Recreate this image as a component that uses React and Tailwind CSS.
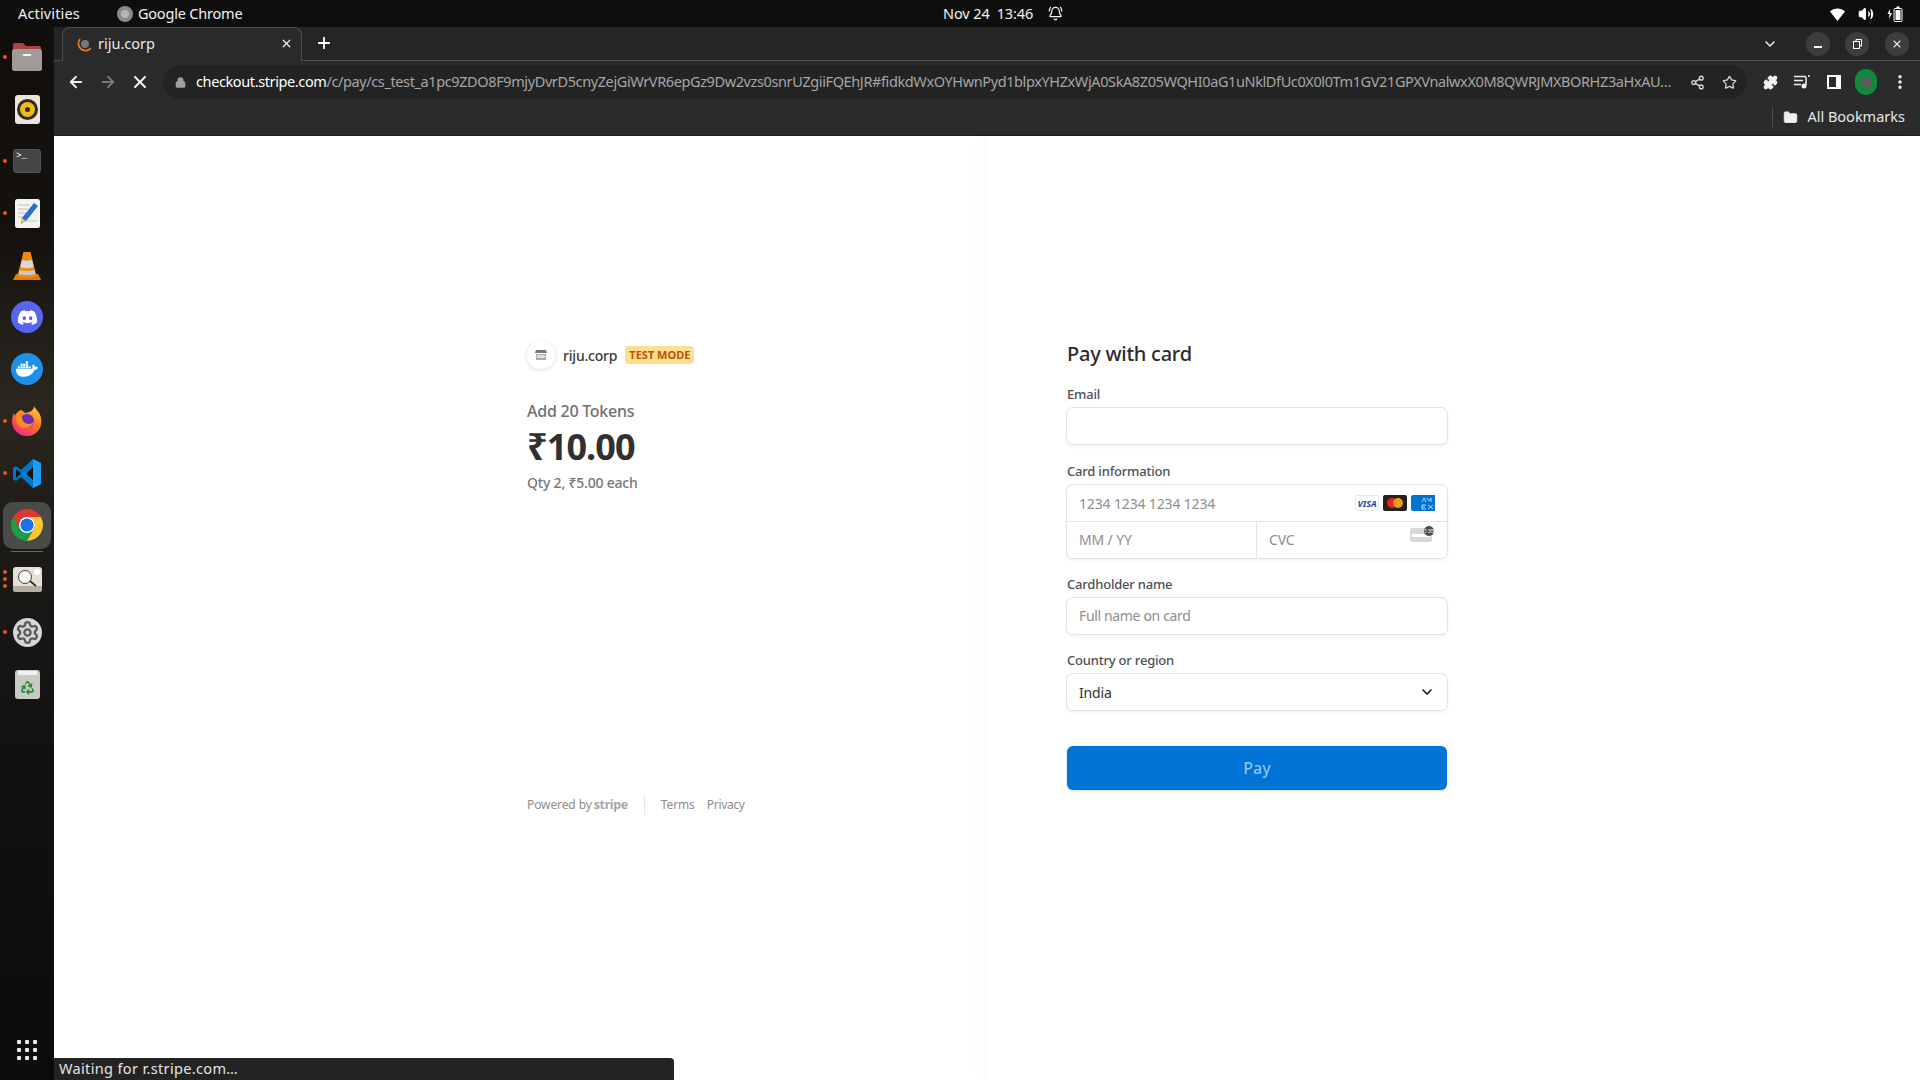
import React from 'react';
import { ArrowLeft, ArrowRight, X, Plus, ChevronDown, Lock, Star, Share2, Puzzle, MoreVertical, Folder, BellRing, Volume2, Settings, Recycle } from 'lucide-react';
import { FaDiscord, FaDocker } from 'react-icons/fa';

const Dots = ({ count = 1 }) => (
  <div className="absolute left-[3px] top-0 bottom-0 flex flex-col justify-center gap-[3px]">
    {Array.from({ length: count }).map((_, i) => (
      <span key={i} className="w-[4px] h-[4px] rounded-full bg-[#e95420]" />
    ))}
  </div>
);

const DockItem = ({ dots, className = '', children }) => (
  <div className={`relative h-[52px] flex items-center justify-center ${className}`}>
    {dots ? <Dots count={dots} /> : null}
    {children}
  </div>
);

const FilesIcon = () => (
  <svg width="32" height="30" viewBox="0 0 32 30">
    <path d="M2 3a2 2 0 0 1 2-2h8l3 3h13a2 2 0 0 1 2 2v6H2z" fill="#a8453c" />
    <rect x="1" y="7" width="30" height="22" rx="2.5" fill="#a09b98" />
    <rect x="12" y="12" width="8" height="2" fill="#f2f2f2" />
  </svg>
);

const RhythmboxIcon = () => (
  <div className="w-[25px] h-[29px] rounded-[3px] bg-[#ebe6da] flex items-center justify-center">
    <div className="w-[21px] h-[21px] rounded-full bg-[#2f2c28] flex items-center justify-center">
      <div className="w-[15px] h-[15px] rounded-full bg-[#eebb1c] flex items-center justify-center">
        <div className="w-[5px] h-[5px] rounded-full bg-[#2f2c28]" />
      </div>
    </div>
  </div>
);

const TerminalIcon = () => (
  <div className="w-[28px] h-[24px] rounded-[3px] bg-[#454545] border border-[#555] relative text-white text-[9px] leading-none pl-[2px] pt-[2px] font-['Liberation_Mono',monospace]">
    &gt;_
  </div>
);

const GeditIcon = () => (
  <svg width="25" height="29" viewBox="0 0 25 29">
    <rect width="25" height="29" rx="2.5" fill="#f3f3f1" />
    <path d="M3 6h12M3 10h10M3 14h8M3 18h6M12 22h10" stroke="#c4c1b8" strokeWidth="1" />
    <path d="M19 4l4 3-12 15-5 3 1-6z" fill="#2a6fd0" />
    <path d="M6 25l1-6 4 3z" fill="#e8b98a" />
  </svg>
);

const VlcIcon = () => (
  <svg width="28" height="31" viewBox="0 0 28 31">
    <path d="M0 30l3-6h22l3 6z" fill="#e07a0a" />
    <path d="M10.500 2h7l6 24c-3 2-16 2-19 0z" fill="#f08a10" />
    <path d="M9 10c3 1 7 1 10 0l1.600 7c-3 1.500-10 1.500-13.200 0z" fill="#d8d8d8" />
    <path d="M6.500 20c4 1.400 11 1.400 15 0l1 4c-4 1.600-13 1.600-17 0z" fill="#c8c8c8" />
  </svg>
);

const FirefoxIcon = () => (
  <svg width="30" height="30" viewBox="0 0 30 30">
    <defs>
      <linearGradient id="ffOuter" x1="0.8" y1="0" x2="0.2" y2="1">
        <stop offset="0" stopColor="#ffcf30" />
        <stop offset="0.5" stopColor="#ff6a2d" />
        <stop offset="1" stopColor="#f0268a" />
      </linearGradient>
    </defs>
    <path d="M22 0c1 3 6 6 7 12 2 10-5 18-14 18S0 23 0 15c0-3 1-6 2-8l1 3c1-3 4-6 7-6 0 2 2 3 4 3 3-1 8-2 8-7z" fill="url(#ffOuter)" />
    <circle cx="15" cy="15" r="7" fill="#6e2fb5" />
    <path d="M5 8c2-2 5-3 8-2-2 1-3 3-3 5 0 4 3 7 7 7 2 0 4-1 5-3-1 4-4 7-8 7-6 0-10-4-10-9 0-2 0-4 1-5z" fill="#ff8a1f" />
  </svg>
);

const VscodeIcon = () => (
  <svg width="28" height="29" viewBox="0 0 28 29">
    <path d="M20 0l8 4v21l-8 4-12-11-5 4-3-2v-11l3-2 5 4z" fill="#0078c8" />
    <path d="M20 0l8 4v21l-8 4z" fill="#1f9cf0" />
    <path d="M20 8l-7 6.500 7 6.500z" fill="#111" />
    <path d="M3 10l5 4.500-5 4.500z" fill="#111" />
  </svg>
);

const ChromeIcon = () => (
  <svg width="32" height="32" viewBox="2 2 44 44">
    <path d="M43.050 13A22 22 0 0 0 4.950 13L14.470 29.500A11 11 0 0 1 24 13Z" fill="#db3a2e" />
    <path d="M4.950 13A22 22 0 0 0 24 46L33.530 29.500A11 11 0 0 1 14.470 29.500Z" fill="#1f9b4c" />
    <path d="M24 46A22 22 0 0 0 43.050 13L24 13A11 11 0 0 1 33.530 29.500Z" fill="#fcc531" />
    <circle cx="24" cy="24" r="11" fill="#fff" />
    <circle cx="24" cy="24" r="9" fill="#1a73e8" />
  </svg>
);

const SearchAppIcon = () => (
  <div className="relative w-[29px] h-[25px] rounded-[3px] bg-[#e4e0d6] overflow-hidden">
    <div className="absolute left-0 right-0 bottom-0 h-[6px] bg-[#b5b0a2]" />
    <div className="absolute right-[2px] top-[2px] w-[6px] h-[6px] rounded-full bg-white" />
    <svg className="absolute inset-0" width="29" height="25" viewBox="0 0 29 25">
      <circle cx="12" cy="10" r="6.500" fill="#f5f5f3" stroke="#444" strokeWidth="1" />
      <path d="M17 14l6 5" stroke="#333" strokeWidth="1.800" />
    </svg>
  </div>
);

const SettingsIcon = () => (
  <div className="w-[29px] h-[29px] rounded-full bg-[#d6d6d4] flex items-center justify-center">
    <Settings size={25} strokeWidth={2.2} className="text-[#5a5a5a]" />
  </div>
);

const TrashIcon = () => (
  <div className="relative w-[25px] h-[29px] rounded-[3px] bg-[#c9c9c6] flex items-center justify-center pt-[6px]">
    <div className="absolute left-[3px] right-[3px] top-[1px] h-[4px] bg-[#f1f1f1]" />
    <Recycle size={15} strokeWidth={2.6} className="text-[#2d8a2d]" />
  </div>
);

const TopBar = () => (
  <div className="h-[27px] shrink-0 bg-[#0e0e0e] relative flex items-center text-[#f2f2f2] text-[14.500px] pl-[18px]">
    <span className="tracking-[0.15px]">Activities</span>
    <span className="ml-[37px] w-[16px] h-[16px] rounded-full bg-[#b5b5b5] border-[4px] border-[#8a8a8a]" />
    <span className="ml-[5px] tracking-[-0.2px]">Google Chrome</span>
    <div className="absolute left-[943px] top-0 h-full flex items-center gap-[7px] tracking-[-0.1px]">
      <span>Nov 24</span>
      <span>13:46</span>
      <BellRing size={15} className="ml-[8px]" />
    </div>
    <div className="ml-auto flex items-center gap-[13px] pr-[17px]">
      <svg width="15" height="14" viewBox="0 0 15 14">
        <path d="M0 4.500C4 0.500 11 0.500 15 4.500L7.500 14z" fill="#fff" />
      </svg>
      <Volume2 size={16} fill="#fff" />
      <svg width="16" height="16" viewBox="0 0 16 16">
        <path d="M3 3L0.500 8h2L2 13l3-6H3z" fill="#fff" />
        <rect x="7" y="2.500" width="8" height="13" rx="1" fill="none" stroke="#fff" />
        <rect x="8.500" y="4" width="5" height="10" fill="#fff" />
        <rect x="9.500" y="0.500" width="3" height="2" fill="#fff" />
      </svg>
    </div>
  </div>
);

const Dock = () => (
  <div className="w-[54px] shrink-0 relative flex flex-col pt-[4px] bg-[linear-gradient(180deg,#120e0c_0%,#15110f_20%,#2c2820_36%,#1d1b18_48%,#111110_70%,#0b0b0b_100%)]">
    <DockItem dots={1}><FilesIcon /></DockItem>
    <DockItem><RhythmboxIcon /></DockItem>
    <DockItem dots={1}><TerminalIcon /></DockItem>
    <DockItem dots={1}><GeditIcon /></DockItem>
    <DockItem><VlcIcon /></DockItem>
    <DockItem>
      <div className="w-[32px] h-[32px] rounded-full bg-[#5865f2] flex items-center justify-center text-white"><FaDiscord size={21} /></div>
    </DockItem>
    <DockItem>
      <div className="w-[32px] h-[32px] rounded-full bg-[#1d91e8] flex items-center justify-center text-white"><FaDocker size={22} /></div>
    </DockItem>
    <DockItem dots={1}><FirefoxIcon /></DockItem>
    <DockItem dots={1}><VscodeIcon /></DockItem>
    <DockItem dots={3}>
      <div className="absolute left-[3px] top-[3px] w-[48px] h-[47px] rounded-[10px] bg-[#4a4a48]" />
      <div className="relative"><ChromeIcon /></div>
      <div className="absolute left-[11px] w-[32px] bottom-[-1px] h-px bg-[#666]" />
    </DockItem>
    <DockItem dots={3} className="mt-[2px]"><SearchAppIcon /></DockItem>
    <DockItem dots={1} className="mt-[1px]"><SettingsIcon /></DockItem>
    <DockItem><TrashIcon /></DockItem>
    <div className="mt-auto mb-[20px] self-center grid grid-cols-3 gap-[4px]">
      {Array.from({ length: 9 }).map((_, i) => (
        <span key={i} className="w-[4px] h-[4px] rounded-[1px] bg-[#f2f2f2]" />
      ))}
    </div>
  </div>
);

const TabStrip = () => (
  <div className="h-[34px] shrink-0 bg-[#252525] border-b border-[#4d4d4d] flex items-end pl-[8px] text-[#e8e8e8]">
    <div className="w-[240px] h-[34px] -mb-px bg-[#2a2a2a] border border-b-0 border-[#4d4d4d] rounded-t-[8px] flex items-center pl-[14px] pr-[8px] pb-[2px] text-[14.500px]">
      <svg width="16" height="16" viewBox="0 0 16 16" className="mr-[5px]">
        <circle cx="8" cy="8" r="4" fill="#777" />
        <path d="M3 3a7 7 0 0 0 11 9" fill="none" stroke="#e8761f" strokeWidth="1.800" />
      </svg>
      <span>riju.corp</span>
      <X size={13} strokeWidth={2.5} className="ml-auto" />
    </div>
    <Plus size={18} strokeWidth={2.4} className="ml-[13px] mb-[8px] text-white" />
    <div className="ml-auto self-center flex items-center pr-[11px]">
      <ChevronDown size={16} strokeWidth={2.4} className="mr-[28px]" />
      <div className="w-[24px] h-[24px] rounded-full bg-[#3d3d3d] flex items-center justify-center mr-[15px]">
        <div className="w-[8px] h-[2px] bg-white mt-[6px]" />
      </div>
      <div className="w-[24px] h-[24px] rounded-full bg-[#3d3d3d] flex items-center justify-center mr-[16px]">
        <svg width="9" height="10" viewBox="0 0 9 10">
          <path d="M3 2V0.500h5.500V7H7" fill="none" stroke="#fff" />
          <rect x="0.500" y="2.500" width="6" height="7" fill="none" stroke="#fff" />
        </svg>
      </div>
      <div className="w-[24px] h-[24px] rounded-full bg-[#3d3d3d] flex items-center justify-center"><X size={12} strokeWidth={2.2} /></div>
    </div>
  </div>
);

const Toolbar = () => (
  <div className="h-[42px] shrink-0 bg-[#2b2b2b] flex items-center text-[#f0f0f0]">
    <ArrowLeft size={18} strokeWidth={2.4} className="ml-[13px]" />
    <ArrowRight size={18} strokeWidth={2.4} className="ml-[14px] text-[#7a7a7a]" />
    <X size={20} strokeWidth={2.4} className="ml-[13px]" />
    <div className="ml-[13px] w-[1584px] h-[34px] rounded-full bg-[#232323] flex items-center pl-[12px]">
      <Lock size={11} strokeWidth={3} fill="#a0a0a0" className="text-[#a0a0a0] shrink-0" />
      <span className="ml-[10px] w-[1476px] whitespace-nowrap text-[14.500px] tracking-[-0.39px] text-[#a6a6a6]">
        <span className="text-white">checkout.stripe.com</span>/c/pay/cs_test_a1pc9ZDO8F9mjyDvrD5cnyZejGiWrVR6epGz9Dw2vzs0snrUZgiiFQEhJR#fidkdWxOYHwnPyd1blpxYHZxWjA0SkA8Z05WQHI0aG1uNklDfUc0X0l0Tm1GV21GPXVnalwxX0M8QWRJMXBORHZ3aHxAU…
      </span>
      <Share2 size={15} strokeWidth={2.2} className="ml-[18px] shrink-0 text-[#d8d8d8]" />
      <Star size={15} strokeWidth={2} className="ml-[17px] shrink-0 text-[#d8d8d8]" />
    </div>
    <Puzzle size={15} fill="#f0f0f0" className="ml-[16px]" />
    <svg width="16" height="14" viewBox="0 0 16 14" className="ml-[16px]">
      <path d="M0 1.500h12M0 5.500h9M0 9.500h7" stroke="#f0f0f0" strokeWidth="1.500" />
      <path d="M12 2v8" stroke="#f0f0f0" strokeWidth="1.500" />
      <path d="M14 1h2" stroke="#f0f0f0" strokeWidth="1.500" />
      <circle cx="10" cy="11" r="2.500" fill="#f0f0f0" />
    </svg>
    <div className="ml-[17px] w-[14px] h-[14px] bg-white flex">
      <div className="ml-[2px] mt-[2px] w-[7px] h-[10px] bg-[#2b2b2b]" />
    </div>
    <div className="ml-[14px] w-[22px] h-[26px] rounded-full bg-[#0f8a3c] flex items-center justify-center">
      <div className="w-[10px] h-[10px] bg-[#5c5c5c]" />
    </div>
    <MoreVertical size={18} strokeWidth={2.6} className="ml-[14px]" />
  </div>
);

const BookmarksBar = () => (
  <div className="h-[33px] shrink-0 bg-[#2b2b2b] border-b border-[#1c1c1c] flex items-center justify-end pr-[15px] pb-[4px] text-[#e8e8e8] text-[14.500px]">
    <div className="w-px h-[20px] bg-[#4d4d4d] mr-[10px]" />
    <Folder size={15} fill="#f0f0f0" strokeWidth={1.5} className="mr-[9px]" />
    <span>All Bookmarks</span>
  </div>
);

const Label = ({ children }) => (
  <div className="text-[13px] leading-[16px] font-medium tracking-[-0.2px] text-[#4f4f52] mb-[6px]">{children}</div>
);

const VisaIcon = () => (
  <div className="w-[24px] h-[16px] rounded-[2px] border border-[#e8e8e8] bg-white flex items-center justify-center text-[9px] leading-none font-bold italic text-[#1a3eb0]">VISA</div>
);

const McIcon = () => (
  <div className="w-[24px] h-[16px] rounded-[2px] bg-[#222] flex items-center justify-center">
    <span className="w-[10px] h-[10px] rounded-full bg-[#e8201f]" />
    <span className="w-[10px] h-[10px] rounded-full bg-[#f79a1c] -ml-[4px]" />
  </div>
);

const AmexIcon = () => (
  <div className="w-[24px] h-[16px] rounded-l-[2px] bg-[#0073d0] flex items-center justify-end pr-[1px]">
    <svg width="13" height="13" viewBox="0 0 13 13">
      <path d="M1 5l2-4 2 4M6 1l2 3 2-3v4M1 8h4M1 8v4h4M1 10h3M7 8l5 4M12 8l-5 4" fill="none" stroke="#bfe0f8" strokeWidth="0.900" />
    </svg>
  </div>
);

const CvcIcon = () => (
  <div className="relative w-[22px] h-[15px] -mt-[9px] shrink-0">
    <div className="absolute left-0 bottom-0 w-[22px] h-[14px] rounded-[2px] bg-[#d8d8d8]" />
    <div className="absolute left-[2px] right-[2px] top-[7px] h-[3px] bg-white" />
    <div className="absolute right-[-2px] top-[-1px] w-[10px] h-[10px] rounded-full bg-[#4b4b4b] text-white text-[6px] leading-[10px] text-center">135</div>
  </div>
);

const fieldShadow = 'rounded-[6px] bg-white shadow-[0_0_0_1px_#e4e4e4,0_2px_4px_rgba(0,0,0,0.07)]';
const inputClass = 'w-full min-w-0 bg-transparent outline-none text-[14px] tracking-[-0.15px] text-[#333] placeholder:text-[#8e8e8e]';

const OrderSummary = () => (
  <div className="w-[932px] shrink-0 pl-[473px] pt-[205px] flex flex-col">
    <div className="flex items-center h-[28px]">
      <div className="w-[28px] h-[28px] rounded-full bg-white shadow-[0_1px_5px_rgba(0,0,0,0.14)] flex items-center justify-center">
        <svg width="12" height="12" viewBox="0 0 12 12">
          <path d="M1 1h10l1 3H0z" fill="#777" />
          <rect x="1" y="5" width="10" height="6" fill="#aaa" />
          <rect x="2" y="6" width="8" height="3" fill="#ddd" />
        </svg>
      </div>
      <span className="ml-[8px] text-[14px] tracking-[-0.2px] font-medium text-[#3a3a3c]">riju.corp</span>
      <span className="ml-[8px] h-[18px] px-[4px] rounded-[4px] bg-[#ffde92] text-[#bb5504] text-[11px] leading-[18px] font-bold">TEST MODE</span>
    </div>
    <div className="mt-[30px] text-[16px] leading-[24px] font-medium tracking-[-0.25px] text-[#707072]">Add 20 Tokens</div>
    <div className="mt-[2px] text-[36px] leading-[44px] font-bold tracking-[-0.9px] text-[#303030]">₹10.00</div>
    <div className="mt-[4px] text-[14px] leading-[20px] font-medium tracking-[-0.2px] text-[#77777a]">Qty 2, ₹5.00 each</div>
    <div className="mt-[302px] flex items-center h-[20px] text-[12px] text-[#8d8d90]">
      <span className="tracking-[-0.1px]">Powered by</span>
      <span className="ml-[2px] text-[12.500px] font-bold tracking-[-0.4px] text-[#a6a6a8]">stripe</span>
      <div className="ml-[16px] w-px h-[20px] bg-[#e6e6e6]" />
      <span className="ml-[16px] tracking-[-0.1px]">Terms</span>
      <span className="ml-[12px] tracking-[-0.3px]">Privacy</span>
    </div>
  </div>
);

const PaymentForm = () => (
  <div className="flex-1 pl-[80px] pt-[205px] border-l border-[#f8f8f8] shadow-[-12px_0_24px_rgba(0,0,0,0.012)]">
    <div className="w-[380px] flex flex-col">
      <div className="text-[20px] leading-[26px] font-medium tracking-[-0.25px] text-[#2b2b2e]">Pay with card</div>
      <div className="mt-[19px]"><Label>Email</Label></div>
      <div className={`${fieldShadow} h-[36px] flex items-center px-[10px]`}>
        <input className={inputClass} />
      </div>
      <div className="mt-[19px]"><Label>Card information</Label></div>
      <div className={`${fieldShadow} h-[73px] flex flex-col`}>
        <div className="h-[37px] border-b border-[#e4e4e4] flex items-center px-[12px]">
          <input className={inputClass} placeholder="1234 1234 1234 1234" />
          <div className="flex gap-[4px] shrink-0">
            <VisaIcon />
            <McIcon />
            <AmexIcon />
          </div>
        </div>
        <div className="flex-1 flex">
          <div className="w-[190px] border-r border-[#e4e4e4] flex items-center pl-[12px] pb-[2px]">
            <input className={inputClass} placeholder="MM / YY" />
          </div>
          <div className="flex-1 flex items-center pl-[12px] pr-[15px] pb-[2px]">
            <input className={inputClass} placeholder="CVC" />
            <CvcIcon />
          </div>
        </div>
      </div>
      <div className="mt-[18px]"><Label>Cardholder name</Label></div>
      <div className={`${fieldShadow} h-[36px] flex items-center px-[12px] pb-[2px]`}>
        <input className={`${inputClass} tracking-[-0.35px]`} placeholder="Full name on card" />
      </div>
      <div className="mt-[18px]"><Label>Country or region</Label></div>
      <div className={`${fieldShadow} h-[36px] flex items-center justify-between px-[12px] text-[14px] tracking-[-0.15px] text-[#333]`}>
        <span>India</span>
        <ChevronDown size={16} strokeWidth={2.4} className="text-[#111]" />
      </div>
      <button className="mt-[36px] h-[44px] rounded-[6px] bg-[#0074d4] shadow-[0_1px_3px_rgba(0,0,0,0.16)] text-[16px] font-medium text-[#8cc0ec]">Pay</button>
    </div>
  </div>
);

const App = () => (
  <div className="relative w-[1920px] h-[1080px] overflow-hidden flex flex-col bg-white font-['Noto_Sans',sans-serif]">
    <TopBar />
    <div className="flex-1 flex min-h-0">
      <Dock />
      <div className="flex-1 flex flex-col min-w-0">
        <TabStrip />
        <Toolbar />
        <BookmarksBar />
        <div className="flex-1 flex bg-white">
          <OrderSummary />
          <PaymentForm />
        </div>
      </div>
    </div>
    <div className="absolute left-[54px] bottom-0 w-[620px] h-[22px] bg-[#232323] rounded-tr-[4px] flex items-center pl-[5px] text-[14.500px] tracking-[0.35px] text-[#e4e4e4]">
      Waiting for r.stripe.com…
    </div>
  </div>
);

export default App;
